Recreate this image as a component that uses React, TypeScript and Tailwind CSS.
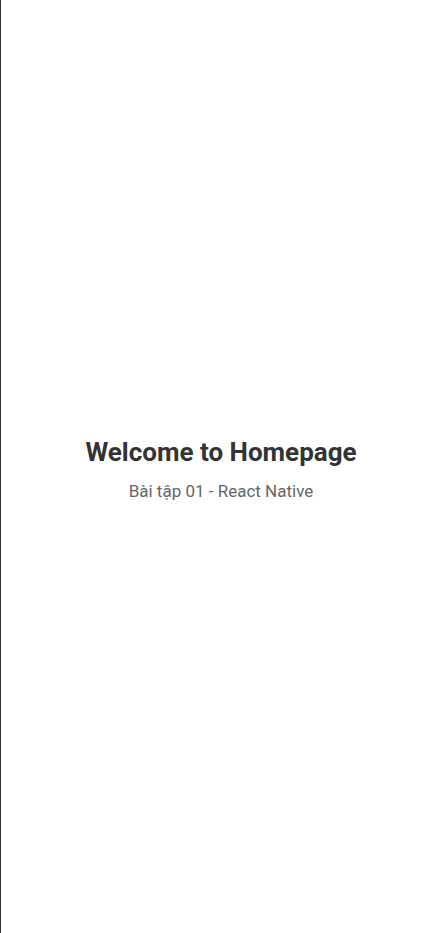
import React from 'react';

const App: React.FC = () => {
  return (
    <div className="h-[933px] w-full bg-white flex border-l border-[#333]" style={{ fontFamily: 'Roboto, sans-serif' }}>
      <div className="flex-1 flex flex-col items-center justify-center pt-[4px]">
        <h1 className="text-[26px] leading-[34px] font-bold text-[#333] mb-[11px]">Welcome to Homepage</h1>
        <p className="text-[17px] leading-[22px] text-[#666]">Bài tập 01 - React Native</p>
      </div>
    </div>
  );
};

export default App;
